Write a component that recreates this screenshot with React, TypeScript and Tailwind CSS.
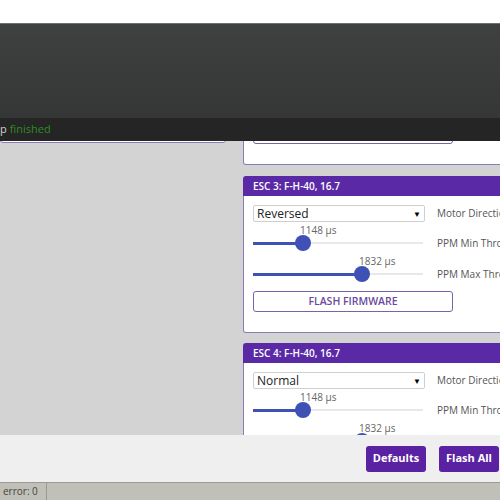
const FONT = { fontFamily: '"Open Sans", "Noto Sans", Arial, sans-serif' };

type Slider = { value: number; pos: number; label: string };

const ValueSlider = ({ value, pos, label }: Slider) => (
  <div className="flex items-start gap-[14px] h-[31px]">
    <div className="relative w-[170px] h-[31px] shrink-0">
      <span
        className="absolute top-0 text-[10px] leading-[12px] text-[#666] whitespace-nowrap"
        style={{ left: pos - 3 }}
      >
        {value} µs
      </span>
      <div className="absolute left-0 right-0 top-[18px] h-[2px] bg-[#e8e8e8]" />
      <div className="absolute left-0 top-[17.5px] h-[3px] bg-[#3f51b5]" style={{ width: pos }} />
      <div
        className="absolute top-[11px] w-[16px] h-[16px] rounded-full bg-[#3f51b5]"
        style={{ left: pos - 8 }}
      />
    </div>
    <span className="mt-[13px] text-[10px] leading-[12px] text-[#555] whitespace-nowrap">{label}</span>
  </div>
);

const EscCard = ({ title, direction, className = '' }: { title: string; direction: string; className?: string }) => (
  <div className={`w-[300px] shrink-0 ${className}`}>
    <div className="h-[20px] bg-[#5a2aa6] rounded-t-[3px] px-[10px] flex items-center text-[10px] font-semibold text-white">
      {title}
    </div>
    <div className="bg-white border border-t-0 border-[#8d7bb8] rounded-b-[3px] pl-[9px] pt-[9px] pb-[20px]">
      <div className="flex items-center gap-[12px] h-[17px]">
        <div className="w-[172px] h-[17px] shrink-0 border border-[#cfcfcf] rounded-[2px] flex items-center justify-between pl-[3px] pr-[3px]">
          <span className="text-[12px] leading-none text-[#222]">{direction}</span>
          <span className="text-[8px] text-black">▼</span>
        </div>
        <span className="text-[10px] text-[#555] whitespace-nowrap">Motor Direction</span>
      </div>
      <div className="mt-[2px]">
        <ValueSlider value={1148} pos={50} label="PPM Min Throttle" />
        <ValueSlider value={1832} pos={109} label="PPM Max Throttle" />
      </div>
      <button className="mt-[5px] w-[200px] h-[21px] border border-[#7a62a8] rounded-[3px] bg-white text-[10.5px] font-semibold text-[#6a4a9c] flex items-center justify-center">
        FLASH FIRMWARE
      </button>
    </div>
  </div>
);

export default function App() {
  return (
    <div className="w-[500px] h-[500px] overflow-hidden flex flex-col bg-white" style={FONT}>
      <div className="h-[23px] bg-white shrink-0" />
      <div className="h-[95px] shrink-0 border-t border-[#6e706f] bg-gradient-to-b from-[#3e4140] to-[#353736]" />
      <div className="h-[23px] shrink-0 bg-[#252525] flex items-center text-[11px]">
        <span className="text-[#cfcfcf]">p</span>
        <span className="ml-[3px] text-[#2e8c22]">finished</span>
      </div>

      <div className="h-[294px] shrink-0 overflow-hidden bg-[#d3d3d3] flex items-start">
        <div className="w-[226px] shrink-0 h-[100px] -mt-[98px] bg-white border border-[#8d7bb8] rounded-b-[3px]" />
        <div className="ml-[17px] flex flex-col gap-[10px]">
          <EscCard title="ESC 2: F-H-40, 16.7" direction="Normal" className="-mt-[133px] mb-[1px]" />
          <EscCard title="ESC 3: F-H-40, 16.7" direction="Reversed" />
          <EscCard title="ESC 4: F-H-40, 16.7" direction="Normal" />
        </div>
      </div>

      <div className="h-[47px] shrink-0 bg-[#efefef] flex items-center justify-end gap-[13px] pr-[1px]">
        <button className="w-[60px] h-[26px] rounded-[3px] bg-[#5a22a3] text-white text-[11px] font-bold">Defaults</button>
        <button className="w-[60px] h-[26px] rounded-[3px] bg-[#5a22a3] text-white text-[11px] font-bold">Flash All</button>
      </div>

      <div className="flex-1 bg-[#c1c0b8] border-t border-[#9a9992] flex items-center">
        <span className="px-[3px] text-[10px] text-[#444] border-r border-[#9a9992] h-full flex items-center w-[47px]">error: 0</span>
      </div>
    </div>
  );
}
